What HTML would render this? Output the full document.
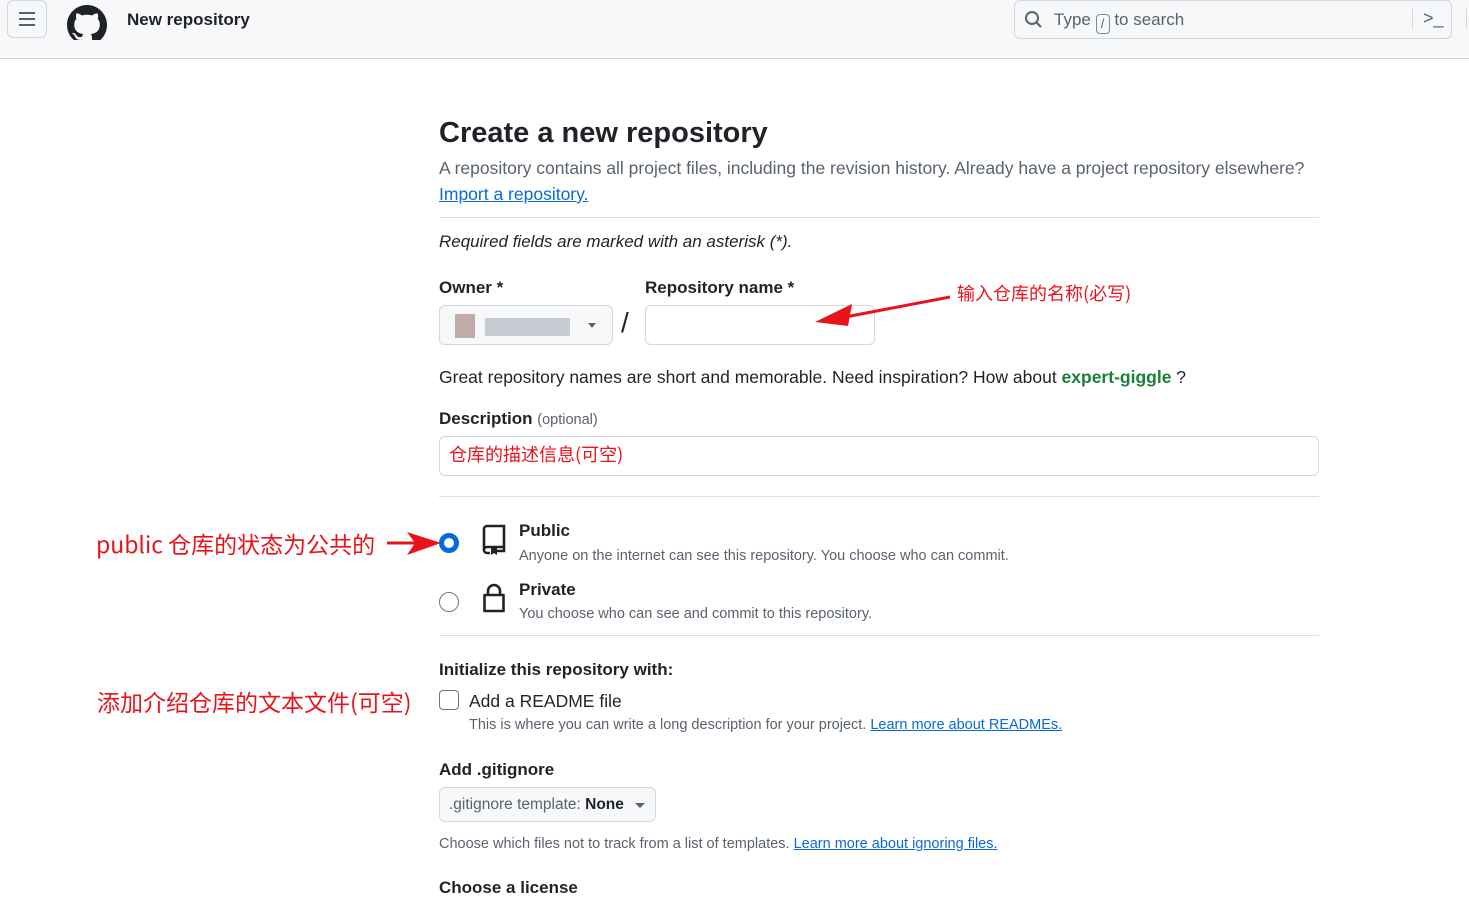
<!DOCTYPE html>
<html><head><meta charset="utf-8"><style>
*{box-sizing:border-box;margin:0;padding:0}
body{width:1469px;height:884px;overflow:hidden;background:#fff;font-family:"Liberation Sans","Noto Sans CJK SC",sans-serif;color:#1f2328;position:relative}
.hdr{position:absolute;left:0;top:0;width:1469px;height:59px;background:#f6f8fa;border-bottom:1px solid #d0d7de}
.a{position:absolute}
.red{color:#e8141c;font-family:"Noto Sans CJK SC","Liberation Sans",sans-serif}
.hr{position:absolute;left:439px;width:880px;height:1px;background:#d8dee4}
.lbl{font-size:17px;font-weight:bold;color:#1f2328}
.sub{font-size:14.5px;color:#59636e}
a{color:#0969da;text-decoration:underline}
</style></head><body>
<div class="hdr">
 <div class="a" style="left:7px;top:0;width:40px;height:38px;border:1px solid #d0d7de;border-radius:6px;background:#f6f8fa"></div>
 <svg class="a" style="left:17px;top:11px" width="20" height="16"><path d="M2 2h16M2 8h16M2 14h16" stroke="#59636e" stroke-width="2"/></svg>
 <svg class="a" style="left:66px;top:0" width="42" height="40" viewBox="0 -2 16 16"><path fill="#1f2328" d="M8 0C3.580 0 0 3.580 0 8c0 3.54 2.290 6.53 5.470 7.59.4.07.55-.17.55-.38v-1.33c-2.230.48-2.7-1.070-2.7-1.070-.36-.92-.89-1.170-.89-1.170-.73-.5.05-.49.05-.49.81.06 1.230.83 1.230.83.72 1.230 1.880.87 2.340.67.07-.52.28-.87.51-1.070-1.780-.2-3.640-.89-3.640-3.950 0-.87.31-1.590.82-2.150-.08-.2-.36-1.020.08-2.120 0 0 .67-.21 2.2.82.64-.18 1.320-.27 2-.27.68 0 1.360.09 2 .27 1.530-1.040 2.2-.82 2.2-.82.44 1.1.16 1.920.08 2.120.51.56.82 1.270.82 2.150 0 3.070-1.870 3.750-3.650 3.950.29.25.54.73.54 1.480v2.2c0 .21.15.46.55.38A8.013 8.013 0 0016 8c0-4.420-3.580-8-8-8z"/></svg>
 <div class="a" style="left:127px;top:10px;font-size:17px;font-weight:bold">New repository</div>
 <div class="a" style="left:1014px;top:0;width:438px;height:39px;border:1px solid #d0d7de;border-radius:6px;background:#f6f8fa"></div>
 <svg class="a" style="left:1024px;top:10px" width="20" height="20"><circle cx="8" cy="8" r="6" fill="none" stroke="#59636e" stroke-width="2"/><path d="M12.5 12.5L17 17" stroke="#59636e" stroke-width="2"/></svg>
 <div class="a" style="left:1054px;top:10px;font-size:17px;color:#59636e">Type <span style="display:inline-block;width:14px;height:20px;border:1px solid #818b98;border-radius:4px;font-size:13px;text-align:center;vertical-align:-3px;line-height:18px">/</span> to search</div>
 <div class="a" style="left:1412px;top:9px;width:1px;height:20px;background:#d0d7de"></div>
 <div class="a" style="left:1423px;top:8px;font-size:18px;color:#59636e">&gt;_</div>
 <div class="a" style="left:1466px;top:9px;width:1px;height:20px;background:#d0d7de"></div>
</div>

<div class="a" style="left:439px;top:117px;font-size:29px;font-weight:bold">Create a new repository</div>
<div class="a" style="left:439px;top:158px;font-size:17.5px;color:#59636e">A repository contains all project files, including the revision history. Already have a project repository elsewhere?</div>
<div class="a" style="left:439px;top:184px;font-size:17.5px"><a>Import a repository.</a></div>
<div class="hr" style="top:217px"></div>
<div class="a" style="left:439px;top:232px;font-size:17px;font-style:italic">Required fields are marked with an asterisk (*).</div>

<div class="a lbl" style="left:439px;top:278px">Owner *</div>
<div class="a lbl" style="left:645px;top:278px">Repository name *</div>
<div class="a" style="left:439px;top:305px;width:174px;height:40px;border:1px solid #d0d7de;border-radius:6px;background:#f6f8fa"></div>
<div class="a" style="left:455px;top:314px;width:20px;height:24px;background:#a98b82;opacity:.7"></div>
<div class="a" style="left:485px;top:318px;width:85px;height:18px;background:#c8ccd3"></div>
<div class="a" style="left:588px;top:323px;border-left:4px solid transparent;border-right:4px solid transparent;border-top:5px solid #59636e"></div>
<div class="a" style="left:621px;top:307px;font-size:28px">/</div>
<div class="a" style="left:645px;top:305px;width:230px;height:40px;border:1px solid #d0d7de;border-radius:6px"></div>
<svg class="a" style="left:810px;top:290px" width="145" height="40"><path d="M140 7 L30 28" stroke="#e8141c" stroke-width="3"/><path d="M5 32 L42 14 L38 36 Z" fill="#e8141c"/></svg>
<div class="a red" style="left:957px;top:280px;font-size:18px">输入仓库的名称(必写)</div>

<div class="a" style="left:439px;top:367px;font-size:17.5px">Great repository names are short and memorable. Need inspiration? How about <b style="color:#1a7f37">expert-giggle</b> ?</div>
<div class="a lbl" style="left:439px;top:409px">Description <span style="font-size:14.5px;color:#59636e;font-weight:normal">(optional)</span></div>
<div class="a" style="left:439px;top:436px;width:880px;height:40px;border:1px solid #d0d7de;border-radius:6px"></div>
<div class="a red" style="left:449px;top:441px;font-size:18px">仓库的描述信息(可空)</div>
<div class="hr" style="top:496px"></div>

<div class="a red" style="left:96px;top:526px;font-size:23px">public 仓库的状态为公共的</div>
<svg class="a" style="left:385px;top:528px" width="60" height="30"><path d="M2 15 L40 15" stroke="#e8141c" stroke-width="3"/><path d="M56 15 L22 4 L30 15 L22 27 Z" fill="#e8141c"/></svg>
<div class="a" style="left:439px;top:533px;width:20px;height:20px;border-radius:50%;border:5px solid #0969da;background:#fff"></div>
<svg class="a" style="left:480px;top:524px" width="28" height="32" viewBox="0 0 28 32"><path d="M4 27V5a3 3 0 013-3h17v21H7a3 3 0 00-3 3 3 3 0 003 3h3M17 27h7v-4" fill="none" stroke="#1f2328" stroke-width="2.6"/><path d="M11 24h6v7l-3-2-3 2z" fill="#1f2328"/></svg>
<div class="a lbl" style="left:519px;top:521px;font-weight:bold">Public</div>
<div class="a sub" style="left:519px;top:548px">Anyone on the internet can see this repository. You choose who can commit.</div>
<div class="a" style="left:439px;top:592px;width:20px;height:20px;border-radius:50%;border:1px solid #6e7781"></div>
<svg class="a" style="left:481px;top:582px" width="26" height="32"><path d="M7 13V9a6 6 0 0112 0v4M3.5 13h19v16h-19z" fill="none" stroke="#1f2328" stroke-width="2.6" stroke-linejoin="round"/></svg>
<div class="a lbl" style="left:519px;top:580px">Private</div>
<div class="a sub" style="left:519px;top:606px">You choose who can see and commit to this repository.</div>
<div class="hr" style="top:635px"></div>

<div class="a lbl" style="left:439px;top:660px">Initialize this repository with:</div>
<div class="a red" style="left:97px;top:684px;font-size:23px">添加介绍仓库的文本文件(可空)</div>
<div class="a" style="left:439px;top:690px;width:20px;height:20px;border:1px solid #6e7781;border-radius:4px"></div>
<div class="a" style="left:469px;top:691px;font-size:17.5px">Add a README file</div>
<div class="a sub" style="left:469px;top:717px">This is where you can write a long description for your project. <a>Learn more about READMEs.</a></div>

<div class="a lbl" style="left:439px;top:760px">Add .gitignore</div>
<div class="a" style="left:439px;top:787px;width:217px;height:35px;border:1px solid #d0d7de;border-radius:6px;background:#f6f8fa;font-size:15.5px;color:#59636e;padding:8px 0 0 9px">.gitignore template: <span style="color:#1f2328;font-weight:bold">None</span></div>
<div class="a" style="left:635px;top:803px;border-left:5px solid transparent;border-right:5px solid transparent;border-top:5px solid #59636e"></div>
<div class="a sub" style="left:439px;top:836px">Choose which files not to track from a list of templates. <a>Learn more about ignoring files.</a></div>
<div class="a lbl" style="left:439px;top:878px">Choose a license</div>
</body></html>
